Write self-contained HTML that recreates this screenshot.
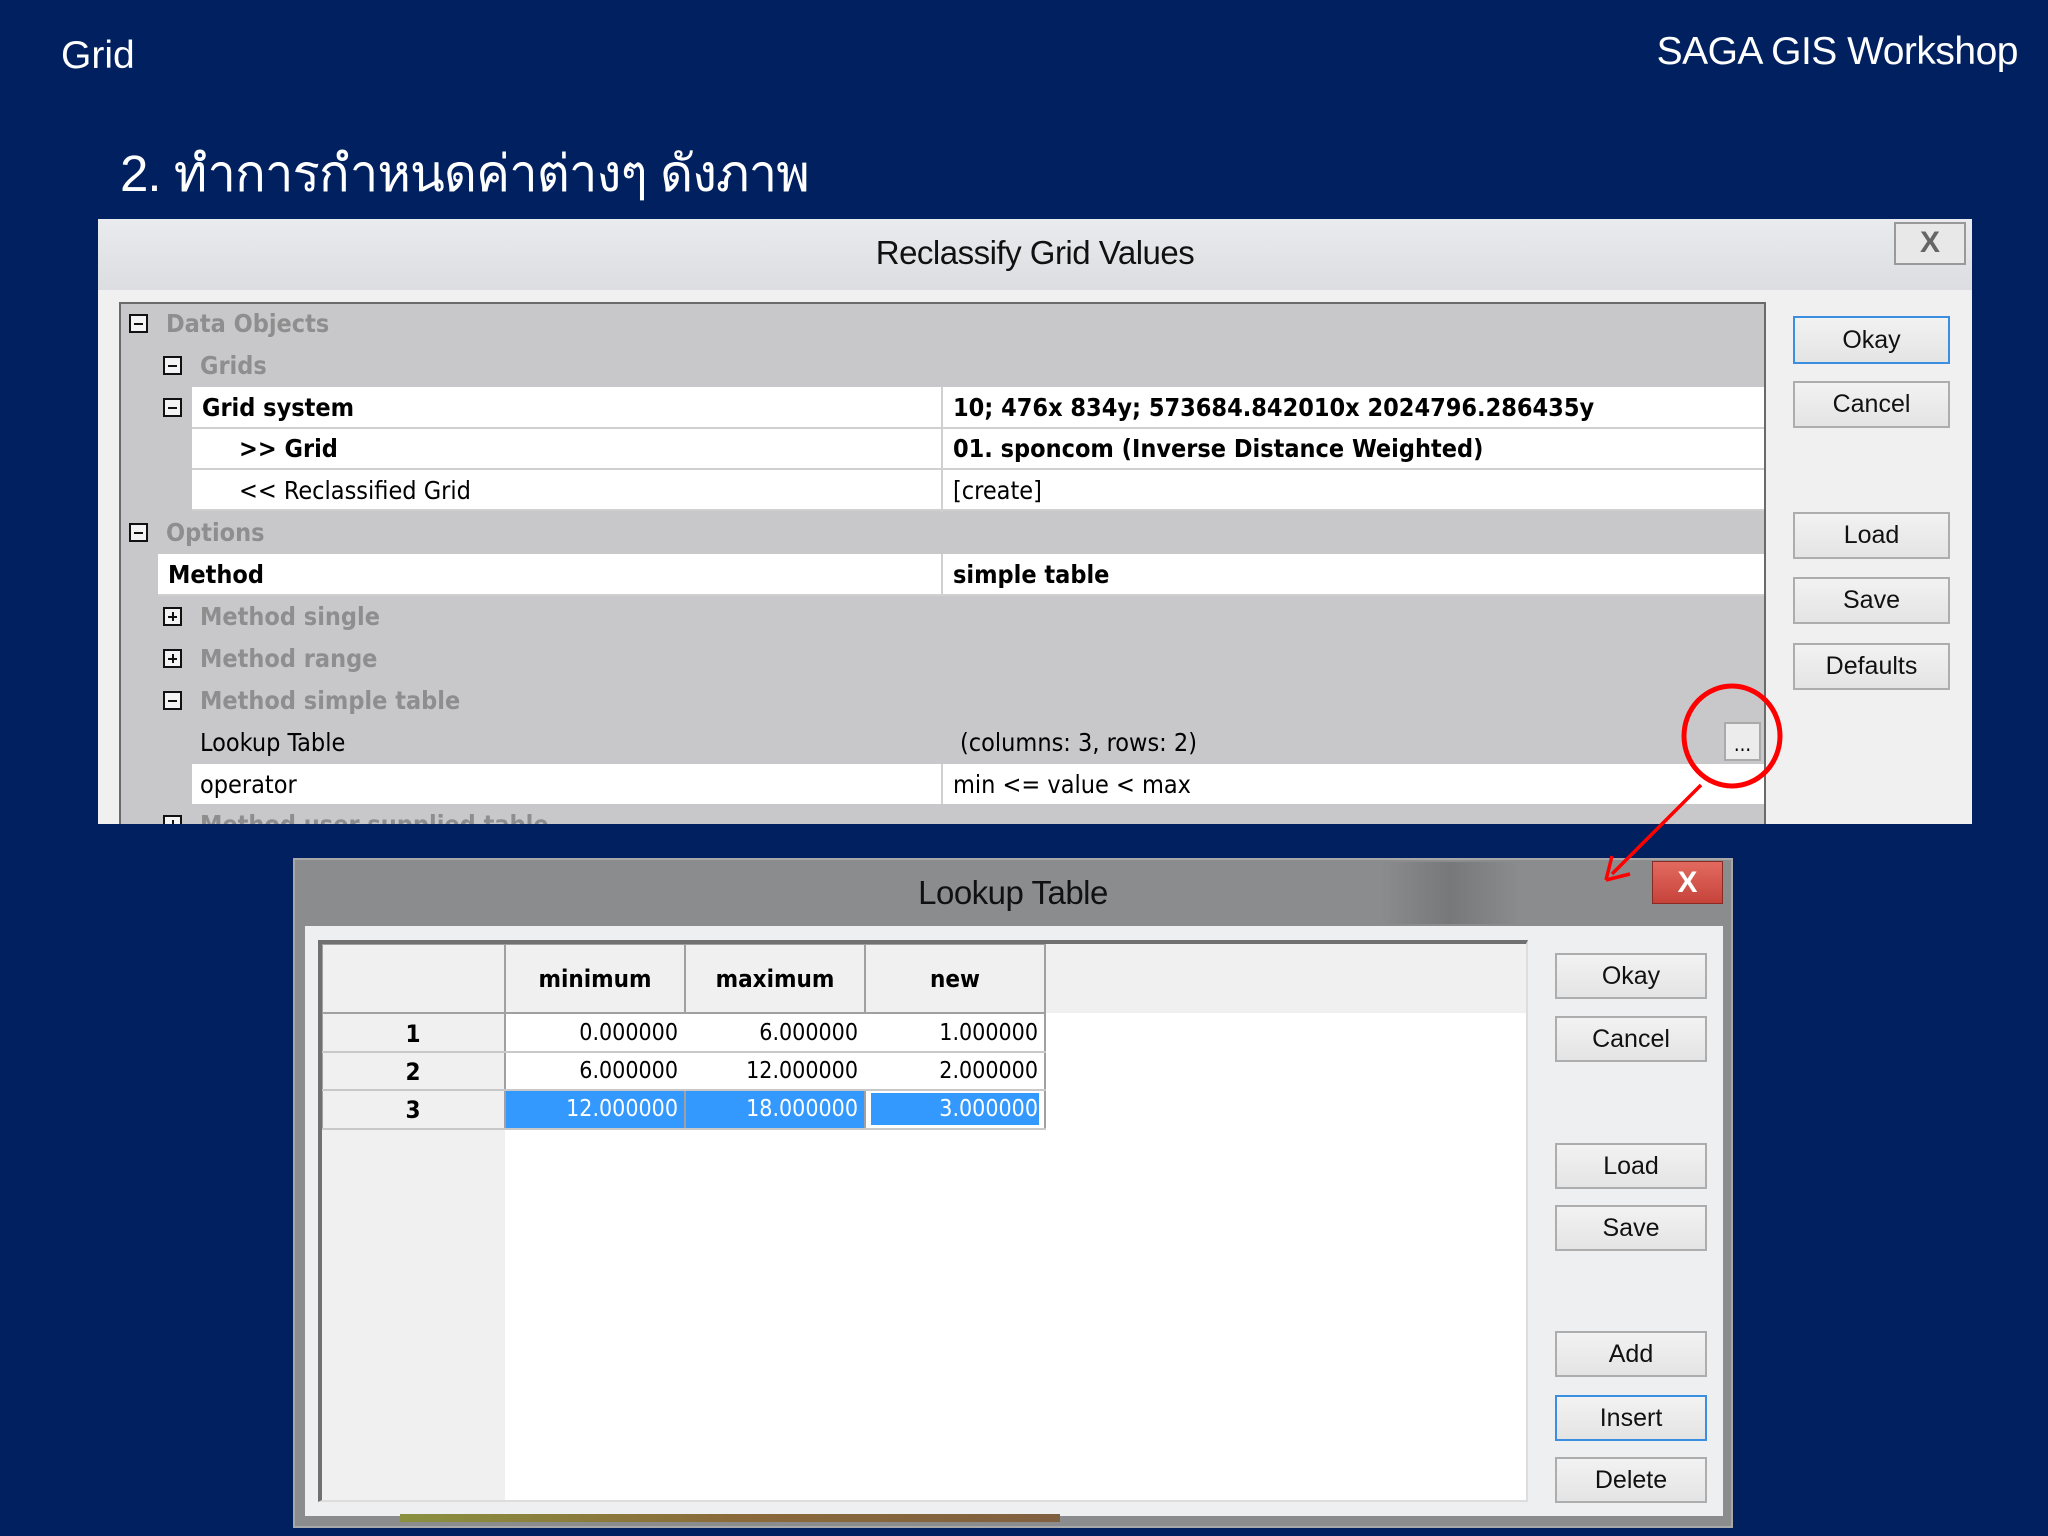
<!DOCTYPE html>
<html><head><meta charset="utf-8"><style>
*{margin:0;padding:0;box-sizing:border-box}
body{width:2048px;height:1536px;background:#00205f;position:relative;overflow:hidden;font-family:"DejaVu Sans Condensed","Liberation Sans",sans-serif}
.a{position:absolute}
.t{position:absolute;white-space:nowrap;font-size:25px;line-height:1}
.g{color:#8e8e8e;font-weight:bold}
.b{font-weight:bold;color:#000}
.box{position:absolute;width:19px;height:19px;border:2px solid #111;background:#f4f4f4}
.box:before{content:"";position:absolute;left:3px;top:7px;width:9px;height:2px;background:#111}
.plus:after{content:"";position:absolute;left:7px;top:3px;width:2px;height:9px;background:#111}
.w{position:absolute;background:#fff;border-bottom:2px solid #d0d0d0}
.btn{position:absolute;border:2px solid #adadad;background:linear-gradient(#f2f2f2,#e4e4e4);font-family:"Liberation Sans",sans-serif;font-size:25px;color:#111;text-align:center}
.btn.f{border-color:#3c8fe0}
.cell{position:absolute;font-size:23px;font-family:"DejaVu Sans Condensed",sans-serif;text-align:right;padding-right:6px;line-height:38px}
</style></head><body>
<div class="t" style="left:61px;top:36px;color:#fff;font-family:'Liberation Sans',sans-serif;font-size:39px">Grid</div>
<div class="t" style="right:30px;top:32px;color:#fff;font-family:'Liberation Sans',sans-serif;font-size:39px;letter-spacing:-0.5px">SAGA GIS Workshop</div>
<div class="t" style="left:120px;top:148px;color:#fff;font-family:'Liberation Sans','Noto Sans CJK SC',sans-serif;font-size:51px;letter-spacing:-1px">2. ทำการกำหนดค่าต่างๆ ดังภาพ</div>

<!-- dialog 1 -->
<div class="a" style="left:98px;top:219px;width:1874px;height:605px;background:#f0f0f0;overflow:hidden">
  <div class="a" style="left:0;top:0;width:1874px;height:71px;background:linear-gradient(#e9ebef,#dcdde0)"></div>
  <div class="t" style="left:0;width:1874px;text-align:center;top:17px;font-family:'Liberation Sans',sans-serif;font-size:33px;color:#111;letter-spacing:-0.5px">Reclassify Grid Values</div>
  <div class="a" style="left:1796px;top:3px;width:72px;height:43px;border:2px solid #999;background:#e8e8e8;text-align:center;font:bold 30px 'Liberation Sans',sans-serif;line-height:38px;color:#666">X</div>
  <div class="a" style="left:21px;top:83px;width:1647px;height:530px;background:#c8c8cb;border:2px solid #6a6a6a;border-bottom:none"></div>
</div>
<!-- rows -->
<div class="box" style="left:129px;top:314px"></div><div class="t g" style="left:166px;top:311px">Data Objects</div>
<div class="box" style="left:163px;top:356px"></div><div class="t g" style="left:200px;top:353px">Grids</div>
<div class="w" style="left:192px;top:387px;width:1572px;height:42px"></div>
<div class="box" style="left:163px;top:398px"></div><div class="t b" style="left:202px;top:395px">Grid system</div>
<div class="t b" style="left:953px;top:395px">10; 476x 834y; 573684.842010x 2024796.286435y</div>
<div class="w" style="left:192px;top:429px;width:1572px;height:41px"></div>
<div class="t b" style="left:239px;top:436px">&gt;&gt; Grid</div>
<div class="t b" style="left:953px;top:436px">01. sponcom (Inverse Distance Weighted)</div>
<div class="w" style="left:192px;top:470px;width:1572px;height:41px"></div>
<div class="t" style="left:239px;top:478px">&lt;&lt; Reclassified Grid</div>
<div class="t" style="left:953px;top:478px">[create]</div>
<div class="box" style="left:129px;top:523px"></div><div class="t g" style="left:166px;top:520px">Options</div>
<div class="w" style="left:158px;top:554px;width:1606px;height:42px"></div>
<div class="t b" style="left:168px;top:562px">Method</div>
<div class="t b" style="left:953px;top:562px">simple table</div>
<div class="a" style="left:941px;top:387px;width:2px;height:125px;background:#d0d0d0"></div>
<div class="a" style="left:941px;top:554px;width:2px;height:42px;background:#d0d0d0"></div>
<div class="box plus" style="left:163px;top:607px"></div><div class="t g" style="left:200px;top:604px">Method single</div>
<div class="box plus" style="left:163px;top:649px"></div><div class="t g" style="left:200px;top:646px">Method range</div>
<div class="box" style="left:163px;top:691px"></div><div class="t g" style="left:200px;top:688px">Method simple table</div>
<div class="t" style="left:200px;top:730px">Lookup Table</div>
<div class="t" style="left:960px;top:730px">(columns: 3, rows: 2)</div>
<div class="a" style="left:1724px;top:722px;width:37px;height:39px;border:2px solid #aaa;background:#ececec;font-size:20px;text-align:center;line-height:40px">...</div>
<div class="w" style="left:192px;top:764px;width:1572px;height:40px;border:none"></div>
<div class="a" style="left:941px;top:764px;width:2px;height:40px;background:#d0d0d0"></div>
<div class="t" style="left:200px;top:772px">operator</div>
<div class="t" style="left:953px;top:772px">min &lt;= value &lt; max</div>
<div class="box plus" style="left:163px;top:815px"></div><div class="t g" style="left:200px;top:812px">Method user supplied table</div>
<div class="a" style="left:0;top:824px;width:2048px;height:34px;background:#00205f"></div>

<div class="btn f" style="left:1793px;top:316px;width:157px;height:48px;line-height:44px">Okay</div>
<div class="btn" style="left:1793px;top:381px;width:157px;height:47px;line-height:43px">Cancel</div>
<div class="btn" style="left:1793px;top:512px;width:157px;height:47px;line-height:43px">Load</div>
<div class="btn" style="left:1793px;top:577px;width:157px;height:47px;line-height:43px">Save</div>
<div class="btn" style="left:1793px;top:643px;width:157px;height:47px;line-height:43px">Defaults</div>

<!-- dialog 2 -->
<div class="a" style="left:293px;top:858px;width:1440px;height:670px;background:#8b8c8e;border:2px solid #a8a8a8"></div>
<div class="a" style="left:1380px;top:862px;width:140px;height:62px;background:linear-gradient(90deg,#8b8c8e,#77787a,#8b8c8e)"></div>
<div class="t" style="left:293px;width:1440px;text-align:center;top:876px;font-family:'Liberation Sans',sans-serif;font-size:33px;color:#111;letter-spacing:-0.5px">Lookup Table</div>
<div class="a" style="left:1652px;top:861px;width:71px;height:43px;background:linear-gradient(#e26a60,#c6433a);border:1px solid #8a2a25;color:#fff;text-align:center;font:bold 30px 'Liberation Sans',sans-serif;line-height:42px">X</div>
<div class="a" style="left:305px;top:926px;width:1418px;height:590px;background:#eeeff1"></div>
<div class="a" style="left:400px;top:1514px;width:660px;height:8px;background:linear-gradient(90deg,#8a9040,#8a6a3a,#806040)"></div>
<div class="a" style="left:318px;top:940px;width:1210px;height:562px;background:#fff;border-top:4px solid #707070;border-left:4px solid #707070;border-right:2px solid #ddd;border-bottom:2px solid #ddd"></div>
<div class="a" style="left:322px;top:944px;width:1204px;height:69px;background:#f0f0f0"></div>
<div class="a" style="left:322px;top:944px;width:183px;height:556px;background:#f0f0f0"></div>
<div class="a" style="left:322px;top:944px;width:724px;height:185px;border:1px solid #a0a0a0"></div>
<div class="a" style="left:504px;top:944px;width:2px;height:185px;background:#a0a0a0"></div>
<div class="a" style="left:684px;top:944px;width:2px;height:185px;background:#a0a0a0"></div>
<div class="a" style="left:864px;top:944px;width:2px;height:185px;background:#a0a0a0"></div>
<div class="a" style="left:1044px;top:944px;width:2px;height:185px;background:#a0a0a0"></div>
<div class="a" style="left:322px;top:1012px;width:724px;height:2px;background:#a0a0a0"></div>
<div class="a" style="left:506px;top:1014px;width:538px;height:38px;background:#fff"></div>
<div class="a" style="left:506px;top:1053px;width:538px;height:37px;background:#fff"></div>
<div class="a" style="left:322px;top:1051px;width:724px;height:2px;background:#c8c8c8"></div>
<div class="a" style="left:322px;top:1089px;width:724px;height:2px;background:#c8c8c8"></div>
<div class="a" style="left:322px;top:1128px;width:724px;height:2px;background:#c8c8c8"></div>
<div class="a" style="left:506px;top:1091px;width:178px;height:37px;background:#3399ff"></div>
<div class="a" style="left:686px;top:1091px;width:178px;height:37px;background:#3399ff"></div>
<div class="a" style="left:871px;top:1093px;width:168px;height:32px;background:#3399ff"></div>
<div class="t b" style="left:506px;width:178px;text-align:center;top:967px;font-size:24px">minimum</div>
<div class="t b" style="left:686px;width:178px;text-align:center;top:967px;font-size:24px">maximum</div>
<div class="t b" style="left:866px;width:178px;text-align:center;top:967px;font-size:24px">new</div>
<div class="t b" style="left:322px;width:182px;text-align:center;top:1022px;font-size:24px">1</div>
<div class="t b" style="left:322px;width:182px;text-align:center;top:1060px;font-size:24px">2</div>
<div class="t b" style="left:322px;width:182px;text-align:center;top:1098px;font-size:24px">3</div>
<div class="cell" style="left:506px;top:1014px;width:178px">0.000000</div>
<div class="cell" style="left:686px;top:1014px;width:178px">6.000000</div>
<div class="cell" style="left:866px;top:1014px;width:178px">1.000000</div>
<div class="cell" style="left:506px;top:1052px;width:178px">6.000000</div>
<div class="cell" style="left:686px;top:1052px;width:178px">12.000000</div>
<div class="cell" style="left:866px;top:1052px;width:178px">2.000000</div>
<div class="cell" style="left:506px;top:1090px;width:178px;color:#fff">12.000000</div>
<div class="cell" style="left:686px;top:1090px;width:178px;color:#fff">18.000000</div>
<div class="cell" style="left:866px;top:1090px;width:178px;color:#fff">3.000000</div>

<div class="btn" style="left:1555px;top:953px;width:152px;height:46px;line-height:42px">Okay</div>
<div class="btn" style="left:1555px;top:1016px;width:152px;height:46px;line-height:42px">Cancel</div>
<div class="btn" style="left:1555px;top:1143px;width:152px;height:46px;line-height:42px">Load</div>
<div class="btn" style="left:1555px;top:1205px;width:152px;height:46px;line-height:42px">Save</div>
<div class="btn" style="left:1555px;top:1331px;width:152px;height:46px;line-height:42px">Add</div>
<div class="btn f" style="left:1555px;top:1395px;width:152px;height:46px;line-height:42px">Insert</div>
<div class="btn" style="left:1555px;top:1457px;width:152px;height:46px;line-height:42px">Delete</div>

<svg class="a" style="left:0;top:0" width="2048" height="1536">
<ellipse cx="1732" cy="736" rx="48" ry="50" fill="none" stroke="#f00" stroke-width="5"/>
<line x1="1701" y1="785" x2="1612" y2="874" stroke="#f00" stroke-width="3.5"/>
<path d="M1606 880 L1612 856 M1606 880 L1630 874" stroke="#f00" stroke-width="3.5" fill="none"/>
</svg>
</body></html>
